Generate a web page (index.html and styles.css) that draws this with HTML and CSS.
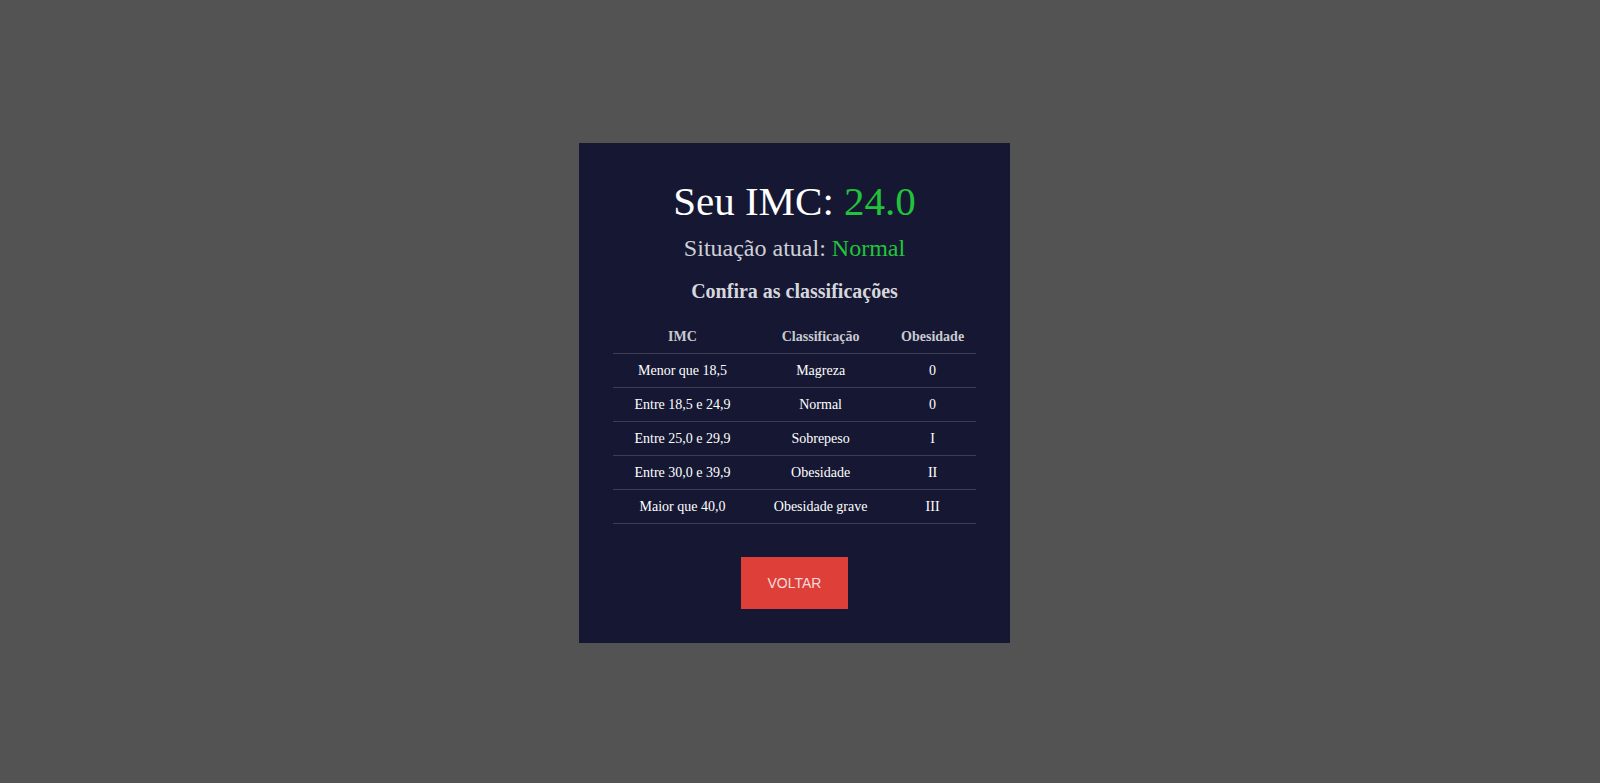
FILE: index.html
```html
<!DOCTYPE html>
<html lang="pt-BR">
<head>
<meta charset="utf-8">
<title>Resultado IMC</title>
<link rel="stylesheet" href="styles.css">
</head>
<body>
<main class="page">
  <section class="card">
    <h1 class="title">Seu IMC: <span class="ok">24.0</span></h1>
    <h2 class="status">Situação atual: <span class="ok">Normal</span></h2>
    <h3 class="subtitle">Confira as classificações</h3>
    <table class="table">
      <thead>
        <tr><th class="col-imc">IMC</th><th class="col-class">Classificação</th><th class="col-ob">Obesidade</th></tr>
      </thead>
      <tbody>
        <tr><td>Menor que 18,5</td><td>Magreza</td><td>0</td></tr>
        <tr><td>Entre 18,5 e 24,9</td><td>Normal</td><td>0</td></tr>
        <tr><td>Entre 25,0 e 29,9</td><td>Sobrepeso</td><td>I</td></tr>
        <tr><td>Entre 30,0 e 39,9</td><td>Obesidade</td><td>II</td></tr>
        <tr><td>Maior que 40,0</td><td>Obesidade grave</td><td>III</td></tr>
      </tbody>
    </table>
    <button class="btn" type="button">VOLTAR</button>
  </section>
</main>
</body>
</html>
```
FILE: styles.css
```css
html, body {
  margin: 0;
  padding: 0;
  background: #535353;
  font-family: "Liberation Serif", "Times New Roman", serif;
}
.page {
  box-sizing: border-box;
  min-height: 100vh;
  display: flex;
  justify-content: center;
  align-items: center;
  padding: 3px 11px 0 0;
}
.card {
  width: 431px;
  box-sizing: border-box;
  background: #161833;
  padding: 35px 34px 34px;
  display: flex;
  flex-direction: column;
  align-items: center;
  text-align: center;
}
.title {
  margin: 0;
  font-size: 41px;
  line-height: 46px;
  font-weight: normal;
  color: #ffffff;
}
.ok {
  color: #22c33a;
}
.status {
  margin: 10px 0 0;
  font-size: 24px;
  line-height: 28px;
  font-weight: normal;
  color: #cfd0d6;
}
.subtitle {
  margin: 18px 0 0;
  font-size: 20px;
  line-height: 23px;
  font-weight: bold;
  color: #d6d7dc;
}
.table {
  margin-top: 18px;
  width: 363px;
  border-collapse: collapse;
  table-layout: fixed;
  font-size: 14px;
  line-height: 16px;
}
.col-imc { width: 38.3%; }
.col-class { width: 37.8%; }
.col-ob { width: 23.9%; }
.table th {
  padding: 8px 0;
  font-weight: bold;
  color: #c9cad0;
  border-bottom: 1px solid #3b3d53;
}
.table td {
  padding: 9px 0 8px;
  color: #ffffff;
  border-bottom: 1px solid #3b3d53;
}
.btn {
  margin-top: 33px;
  width: 107px;
  height: 52px;
  border: none;
  background: #de3f39;
  color: #f6dcdc;
  font-family: "Liberation Sans", Arial, sans-serif;
  font-size: 14px;
  cursor: pointer;
}
```
